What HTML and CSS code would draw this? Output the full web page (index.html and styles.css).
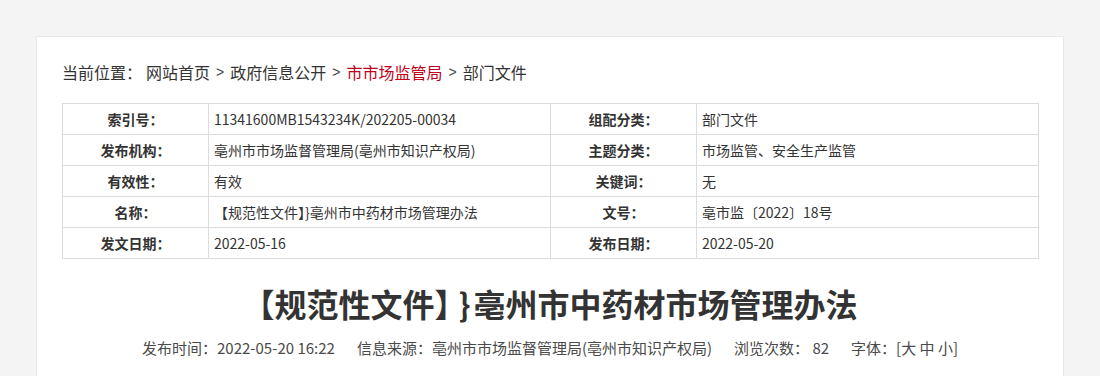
FILE: index.html
```html
<!DOCTYPE html>
<html lang="zh-CN">
<head>
<meta charset="utf-8">
<title>亳州市中药材市场管理办法</title>
<link rel="stylesheet" href="styles.css">
</head>
<body>
<div class="card">
  <div class="crumb">
    <span class="crumb-label">当前位置：</span>
    <a class="crumb-link" href="#">网站首页</a>
    <span class="sep">&gt;</span>
    <a class="crumb-link" href="#">政府信息公开</a>
    <span class="sep">&gt;</span>
    <a class="crumb-link crumb-red" href="#">市市场监管局</a>
    <span class="sep">&gt;</span>
    <a class="crumb-link" href="#">部门文件</a>
  </div>
  <table class="info">
    <colgroup>
      <col class="c-label"><col class="c-val"><col class="c-label"><col class="c-val">
    </colgroup>
    <tr>
      <th>索引号<span class="colon">：</span></th><td>11341600MB1543234K/202205-00034</td>
      <th>组配分类<span class="colon">：</span></th><td>部门文件</td>
    </tr>
    <tr>
      <th>发布机构<span class="colon">：</span></th><td>亳州市市场监督管理局(亳州市知识产权局)</td>
      <th>主题分类<span class="colon">：</span></th><td>市场监管、安全生产监管</td>
    </tr>
    <tr>
      <th>有效性<span class="colon">：</span></th><td>有效</td>
      <th>关键词<span class="colon">：</span></th><td>无</td>
    </tr>
    <tr>
      <th>名称<span class="colon">：</span></th><td>【规范性文件】}亳州市中药材市场管理办法</td>
      <th>文号<span class="colon">：</span></th><td>亳市监〔2022〕18号</td>
    </tr>
    <tr>
      <th>发文日期<span class="colon">：</span></th><td>2022-05-16</td>
      <th>发布日期<span class="colon">：</span></th><td>2022-05-20</td>
    </tr>
  </table>
  <h1 class="title">【规范性文件】<span class="brace">}</span>亳州市中药材市场管理办法</h1>
  <div class="meta">
    <span>发布时间<span class="colon">：</span>2022-05-20 16:22</span>
    <span>信息来源<span class="colon">：</span>亳州市市场监督管理局(亳州市知识产权局)</span>
    <span>浏览次数<span class="colon">：</span> 82</span>
    <span>字体<span class="colon">：</span>[大 中 小]</span>
  </div>
</div>
</body>
</html>
```

FILE: styles.css
```css
html, body {
  margin: 0;
  padding: 0;
  background: #f4f4f4;
  font-family: "Noto Sans CJK SC", "Noto Sans", sans-serif;
  color: #333;
}
body {
  padding-top: 36px;
}
.card {
  width: 976px;
  margin: 0 auto;
  background: #fff;
  border: 1px solid #e9e9e9;
  padding: 24px 25px 40px;
}
.colon {
  display: inline-block;
  width: 1em;
  text-align: center;
}
.crumb {
  font-size: 16px;
  line-height: 22px;
  height: 22px;
  color: #333;
  display: flex;
  align-items: center;
  gap: 6px;
}
.crumb-label {
  margin-right: -2px;
}
.crumb-link {
  color: #333;
  text-decoration: none;
}
.crumb-red {
  color: #c0001a;
}
.sep {
  font-family: "Liberation Sans", sans-serif;
  font-size: 14px;
  color: #444;
}
.info {
  margin-top: 20px;
  width: 976px;
  border-collapse: collapse;
  table-layout: fixed;
  font-size: 14px;
}
.c-label { width: 146px; }
.c-val { width: 342px; }
.info th,
.info td {
  border: 1px solid #dcdcdc;
  height: 30px;
  padding: 0 5px;
  line-height: 18px;
  color: #333;
}
.info th {
  font-weight: bold;
  text-align: center;
}
.info td {
  text-align: left;
}
.title {
  margin: 22px 0 0;
  text-align: center;
  font-size: 32px;
  line-height: 44px;
  font-weight: bold;
  color: #333;
}
.brace {
  margin: 0 3px 0 8px;
}
.meta {
  margin-top: 12px;
  display: flex;
  justify-content: center;
  gap: 22px;
  font-size: 15px;
  line-height: 22px;
  color: #4a4a4a;
}
```
